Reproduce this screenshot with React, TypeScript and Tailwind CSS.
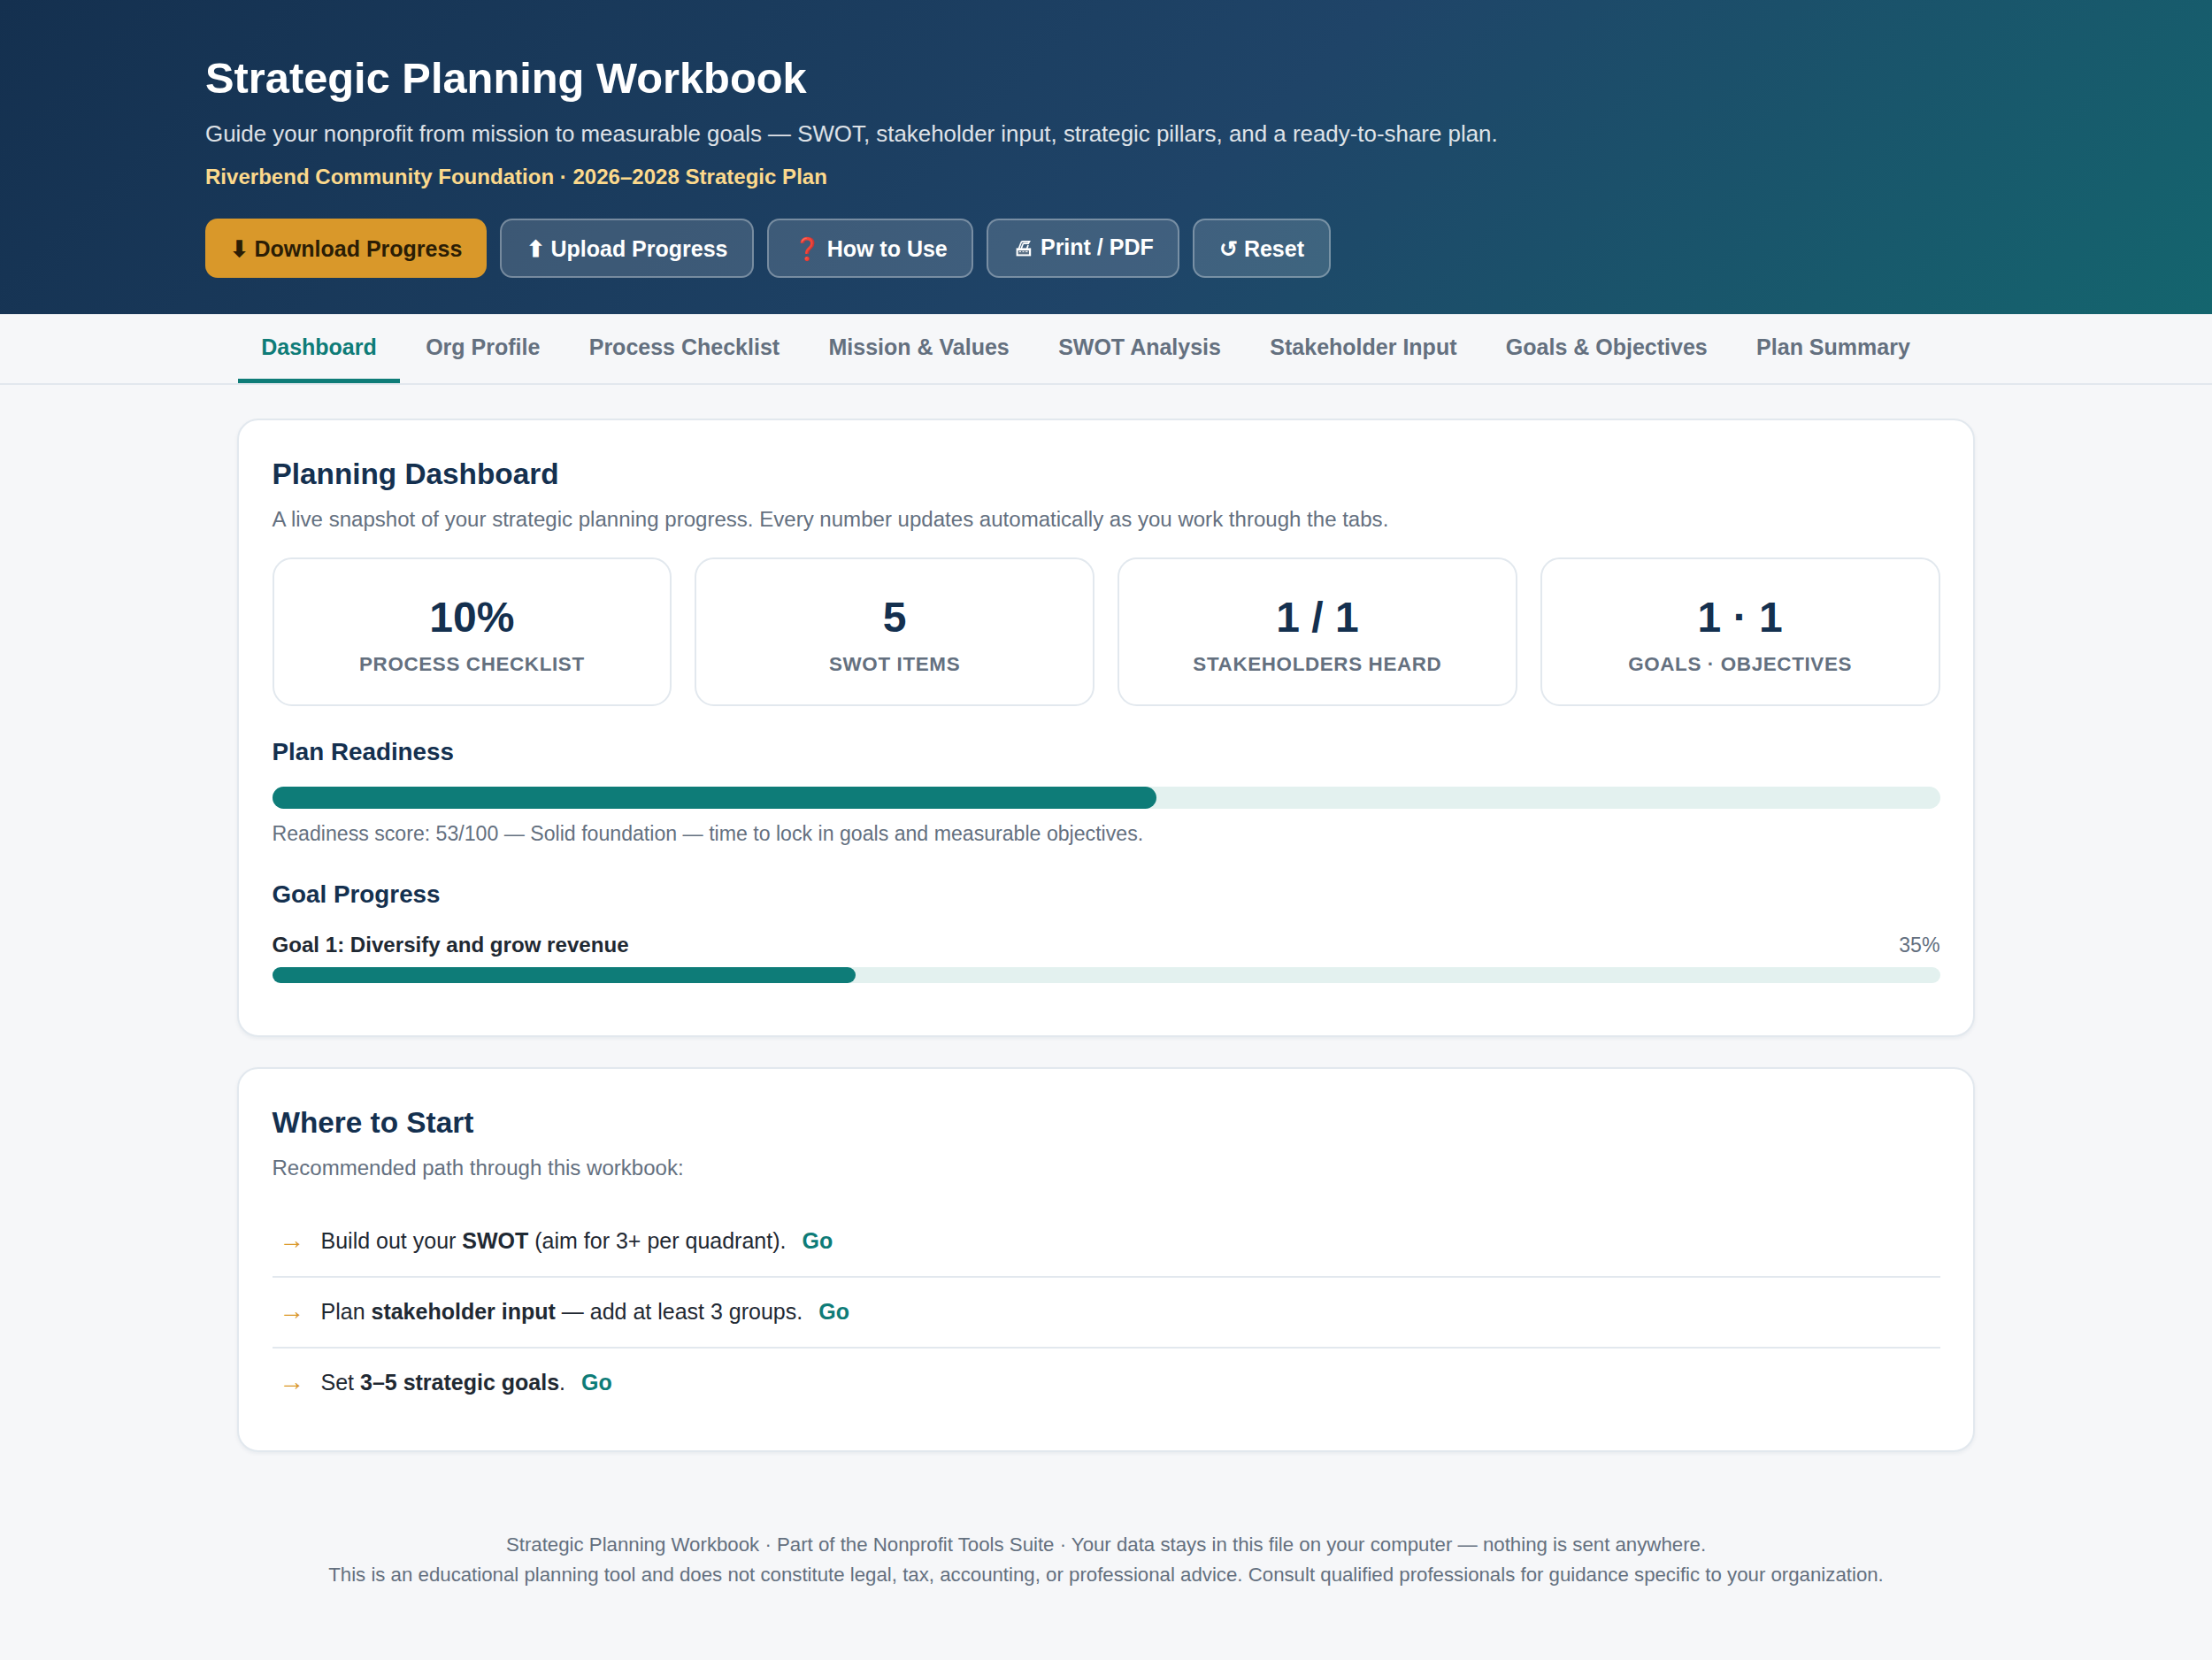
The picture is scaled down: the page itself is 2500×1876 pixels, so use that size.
import React from "react";

const tabs = ["Dashboard", "Org Profile", "Process Checklist", "Mission & Values", "SWOT Analysis", "Stakeholder Input", "Goals & Objectives", "Plan Summary"];

const stats = [
  { value: "10%", label: "Process Checklist" },
  { value: "5", label: "SWOT Items" },
  { value: "1 / 1", label: "Stakeholders Heard" },
  { value: "1 · 1", label: "Goals · Objectives" },
];

const ghostBtn = "h-[67px] rounded-[14px] border-2 border-white/30 bg-white/15 px-[27.6px] text-[25px] font-bold text-white";

const Arrow = () => <span className="w-[55px] shrink-0 pb-[2px] pl-[8px] text-[28.8px] text-[#d9982a]">→</span>;
const GoLink = () => <a className="ml-[18px] font-bold text-[#0e7c78]">Go</a>;

const PrinterGlyph = () => (
  <svg viewBox="0 0 18 19" className="mt-[1px] mr-[10px] ml-[3px] h-[19px] w-[18px] shrink-0" fill="none">
    <path d="M3.5 10 L6 3.2 Q6.4 1.8 8 1.8 H15.5 L14.2 4.2 H9.2 Q8.2 4.2 7.9 5.2 L6.2 10 M12.6 10 L14 6" stroke="#fff" strokeWidth="1.7" />
    <rect x="0.6" y="9.4" width="16.6" height="9" fill="#fff" />
    <rect x="2.6" y="12" width="12.4" height="4.4" fill="#5d7287" />
    <path d="M4 13.4 H6 M7.5 13.4 H9.5 M11 13.4 H13.5" stroke="#fff" strokeWidth="1" />
  </svg>
);

export default function App() {
  return (
    <div className="min-h-[1876px] bg-[#f6f7f9] font-['Liberation_Sans',Arial,sans-serif] text-[#1f2933]">
      {/* Header */}
      <header className="h-[355px] bg-[linear-gradient(135deg,#14304f_0%,#1f4468_55%,#14656e_100%)] pl-[232px] pt-[55.5px]">
        <h1 className="text-[48.8px] leading-[64px] font-bold text-white">Strategic Planning Workbook</h1>
        <p className="mt-[12px] text-[25.9px] leading-[38px] text-white/85">
          Guide your nonprofit from mission to measurable goals — SWOT, stakeholder input, strategic pillars, and a ready-to-share plan.
        </p>
        <p className="mt-[11px] text-[24.05px] leading-[38px] font-bold text-[#fcd98c]">Riverbend Community Foundation · 2026–2028 Strategic Plan</p>
        <div className="mt-[28.5px] flex gap-[15px]">
          <button className="h-[67px] rounded-[14px] bg-[#d9982a] px-[27.6px] pt-[2px] text-[25px] font-bold text-[#2b1d05]">⬇ Download Progress</button>
          <button className={`${ghostBtn} pt-[2px]`}>⬆ Upload Progress</button>
          <button className={`${ghostBtn} pt-[2px]`}>❓ How to Use</button>
          <button className={`${ghostBtn} inline-flex items-center pb-[2px]`}><PrinterGlyph />Print / PDF</button>
          <button className={`${ghostBtn} pt-[2px]`}>↺ Reset</button>
        </div>
      </header>

      {/* Tabs */}
      <nav className="h-[80px] border-b-2 border-[#e2e8ee] pl-[268.5px]">
        <ul className="flex h-[78px] gap-[2px]">
          {tabs.map((tab, i) => (
            <li
              key={tab}
              className={
                i === 0
                  ? "flex items-center border-b-[5px] border-[#0e7c78] px-[26.7px] pt-[2px] text-[25px] font-bold text-[#0e7c78]"
                  : "flex items-center border-b-[5px] border-transparent px-[26.7px] pt-[2px] text-[25px] font-bold text-[#64707f]"
              }
            >
              {tab}
            </li>
          ))}
        </ul>
      </nav>

      <main className="mx-[268px] flex flex-col gap-[34px] pt-[38px]">
        {/* Planning Dashboard */}
        <section className="h-[699px] rounded-[24px] border-2 border-[#e2e8ee] bg-white px-[37.5px] pt-[38px] shadow-[0_2px_4px_rgba(20,48,79,0.06)]">
          <h2 className="text-[33.35px] leading-[46px] font-bold text-[#14304f]">Planning Dashboard</h2>
          <p className="mt-[9.5px] text-[24.05px] leading-[36px] text-[#64707f]">
            A live snapshot of your strategic planning progress. Every number updates automatically as you work through the tabs.
          </p>
          <div className="mt-[25px] grid grid-cols-4 gap-[26px]">
            {stats.map((s) => (
              <div key={s.label} className="flex h-[168px] flex-col items-center rounded-[22px] border-2 border-[#e2e8ee] pt-[38.5px]">
                <div className="text-[48px] leading-[56px] font-bold text-[#14304f]">{s.value}</div>
                <div className="mt-[10px] text-[22.4px] leading-[30px] font-bold tracking-[0.64px] text-[#64707f] uppercase">{s.label}</div>
              </div>
            ))}
          </div>
          <h3 className="mt-[33.5px] text-[27.8px] leading-[38px] font-bold text-[#14304f]">Plan Readiness</h3>
          <div className="mt-[20px] h-[25px] rounded-full bg-[#e3f1ef]">
            <div className="h-full w-[53%] rounded-full bg-[#0e7c78]" />
          </div>
          <p className="mt-[10px] text-[23.14px] leading-[36px] text-[#64707f]">
            Readiness score: 53/100 — Solid foundation — time to lock in goals and measurable objectives.
          </p>
          <h3 className="mt-[32px] text-[27.8px] leading-[38px] font-bold text-[#14304f]">Goal Progress</h3>
          <div className="mt-[20px] flex items-center justify-between">
            <span className="text-[24.1px] leading-[36px] font-bold">Goal 1: Diversify and grow revenue</span>
            <span className="text-[23.14px] leading-[36px] text-[#64707f]">35%</span>
          </div>
          <div className="mt-[6.5px] h-[18px] rounded-full bg-[#e3f1ef]">
            <div className="h-full w-[35%] rounded-full bg-[#0e7c78]" />
          </div>
        </section>

        {/* Where to Start */}
        <section className="h-[434.5px] rounded-[24px] border-2 border-[#e2e8ee] bg-white px-[37.5px] pt-[38px] shadow-[0_2px_4px_rgba(20,48,79,0.06)]">
          <h2 className="text-[33.35px] leading-[46px] font-bold text-[#14304f]">Where to Start</h2>
          <p className="mt-[9.5px] text-[24.05px] leading-[36px] text-[#64707f]">Recommended path through this workbook:</p>
          <ul className="mt-[26.5px] text-[25px]">
            <li className="flex h-[80px] items-center border-b-2 border-[#e2e8ee]">
              <Arrow />
              <span>Build out your <strong>SWOT</strong> (aim for 3+ per quadrant).</span>
              <GoLink />
            </li>
            <li className="flex h-[80px] items-center border-b-2 border-[#e2e8ee]">
              <Arrow />
              <span>Plan <strong>stakeholder input</strong> — add at least 3 groups.</span>
              <GoLink />
            </li>
            <li className="flex h-[80px] items-center border-b-2 border-transparent">
              <Arrow />
              <span>Set <strong>3–5 strategic goals</strong>.</span>
              <GoLink />
            </li>
          </ul>
        </section>
      </main>

      <footer className="mt-[88.5px] text-center text-[22.24px] leading-[34px] text-[#64707f]">
        <p>Strategic Planning Workbook · Part of the Nonprofit Tools Suite · Your data stays in this file on your computer — nothing is sent anywhere.</p>
        <p>This is an educational planning tool and does not constitute legal, tax, accounting, or professional advice. Consult qualified professionals for guidance specific to your organization.</p>
      </footer>
    </div>
  );
}
